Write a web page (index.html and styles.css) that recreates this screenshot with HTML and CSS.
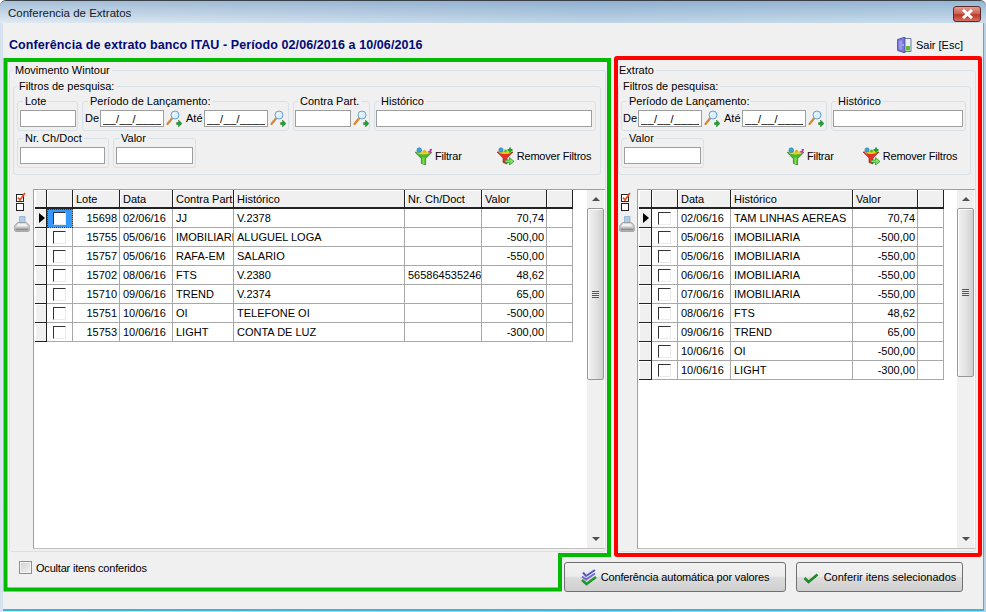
FILE: index.html
```html
<!DOCTYPE html>
<html lang="pt">
<head>
    <meta charset="UTF-8">
    <meta name="viewport" content="width=device-width, initial-scale=1.0">
    <title>Conferencia de Extratos</title>
    <link rel="stylesheet" href="styles.css">
</head>
<body>
    <svg class="sprite" xmlns="http://www.w3.org/2000/svg">
        <symbol id="i-search" viewBox="0 0 16 17">
            <path d="M6 8.500 1.500 14" stroke="#d9862c" stroke-width="2.200" stroke-linecap="round"/>
            <circle cx="9" cy="5" r="4" fill="#d8eefc" stroke="#6f9fd0"/>
            <path d="M7 5.500a2.500 2.500 0 0 1 2.500-2.500" fill="none" stroke="#fff" stroke-width="1.200"/>
            <path d="M10.500 12.500h2v-2.500l3.500 3.500-3.500 3.500v-2.500h-2z" fill="#1f9e2c" stroke="#0f6d1a" stroke-width=".4"/>
        </symbol>
        <symbol id="i-funnel" viewBox="0 0 16 17">
            <path d="M0 5h16l-6 6v6l-4-1.500v-4.500z" fill="#49b82c" stroke="#1f7d1a" stroke-width=".6"/>
            <path d="M7 10h2v6H7z" fill="#7fd84f"/>
            <ellipse cx="8" cy="5.500" rx="6" ry="1.500" fill="#e5d22a"/>
            <circle cx="4" cy="3" r="2.200" fill="#39a6e0" stroke="#1f6d9e" stroke-width=".5"/>
            <circle cx="9" cy="4" r="1.400" fill="#e8b020"/>
            <path d="M12.500 4.500h2v-2h1.500" fill="none" stroke="#d81fc8" stroke-width="1.400"/>
        </symbol>
        <symbol id="i-funnel-red" viewBox="0 0 17 18">
            <path d="M0 5h16l-6 6v6l-4-1.500v-4.500z" fill="#e3342a" stroke="#94140e" stroke-width=".6"/>
            <ellipse cx="8" cy="5.500" rx="6" ry="1.500" fill="#e5d22a"/>
            <circle cx="4" cy="3" r="2.200" fill="#39a6e0" stroke="#1f6d9e" stroke-width=".5"/>
            <circle cx="8.500" cy="4" r="1.400" fill="#58b82a"/>
            <path d="M13 0.500v5M10.500 3h5" stroke="#1f9e2c" stroke-width="1.800"/>
            <path d="M8 13h4.500v-2.500l4.500 4-4.500 3.500v-2.500H8z" fill="#7fe05a" stroke="#1f8a2a" stroke-width=".7"/>
        </symbol>
        <symbol id="i-door" viewBox="0 0 15 16">
            <path d="M6 1.500h8v13H6z" fill="#e8f0f4" stroke="#6f78a8"/>
            <path d="M9 9h4v4.500H9z" fill="#5cc02c"/>
            <path d="M0.500 2.500 8 0v16L.500 13.500z" fill="#7a78d8" stroke="#4a4896" stroke-width=".8"/>
            <path d="M2 4 5 3v10l-3-1z" fill="#9a9ae8"/>
            <circle cx="6" cy="8" r=".8" fill="#e8e8ff"/>
        </symbol>
        <symbol id="i-printer" viewBox="0 0 16 16">
            <path d="M5.500 0.500h5.500v7H5.500z" fill="#a9cdea" stroke="#7fa0bd" stroke-width=".6"/>
            <path d="M3.500 6.500h9l3.500 4v3.500l-1.500 1.500h-13L0 14v-3.500z" fill="#c4c4c4" stroke="#8a8a8a" stroke-width=".6"/>
            <path d="M4 7.500h8l2 3H2z" fill="#f2f2f2"/>
            <path d="M1.500 12.500h13v2h-13z" fill="#8f8f8f"/>
        </symbol>
        <symbol id="i-check-all" viewBox="0 0 10 10">
            <rect x=".5" y="2.500" width="7" height="7" fill="#fff" stroke="#222"/>
            <path d="M2 5.500 4 8l5-7" fill="none" stroke="#ea4f1c" stroke-width="1.700"/>
        </symbol>
        <symbol id="i-check-none" viewBox="0 0 8 8">
            <rect x=".5" y=".5" width="7" height="7" fill="#fff" stroke="#222"/>
        </symbol>
        <symbol id="i-check" viewBox="0 0 16 17">
            <path d="M1.500 9 5.500 13 14.500 5.500" fill="none" stroke="#1f8a2a" stroke-width="2.600"/>
        </symbol>
        <symbol id="i-check-double" viewBox="0 0 16 17">
            <path d="M2 3.500 5 7l9-6" fill="none" stroke="#5a55c8" stroke-width="2"/>
            <path d="M1 7.500 5 10.500l9-6" fill="none" stroke="#6f6ad8" stroke-width="2"/>
            <path d="M1 11 5.500 15 15 8" fill="none" stroke="#1f9a2a" stroke-width="2.600"/>
        </symbol>
    </svg>

    <div class="window">
        <div class="titlebar">
            <span class="title">Conferencia de Extratos</span>
            <button class="close">
                <svg width="15" height="10" viewBox="0 0 15 10"><path d="M3 1 12 9M12 1 3 9" stroke="#fff" stroke-width="3"/></svg>
            </button>
        </div>

        <div class="content">
            <div class="head">
                <h1>Conferência de extrato banco ITAU - Período 02/06/2016 a 10/06/2016</h1>
                <span class="sair"><svg class="icon-door"><use href="#i-door"/></svg>Sair [Esc]</span>
            </div>

            <div class="panels">
                <fieldset class="panel panel-left">
                    <legend>Movimento Wintour</legend>
                    <fieldset class="filters">
                        <legend>Filtros de pesquisa:</legend>
                        <div class="filter-row">
                            <fieldset class="box box-lote">
                                <legend>Lote</legend>
                                <input class="field w56" type="text">
                            </fieldset>
                            <fieldset class="box box-periodo">
                                <legend>Período de Lançamento:</legend>
                                <span class="lbl-de">De</span><input class="field date" type="text" value="__/__/____"><svg class="icon-search"><use href="#i-search"/></svg><span class="lbl-ate">Até</span><input class="field date" type="text" value="__/__/____"><svg class="icon-search"><use href="#i-search"/></svg>
                            </fieldset>
                            <fieldset class="box box-contra">
                                <legend>Contra Part.</legend>
                                <input class="field w56" type="text"><svg class="icon-search"><use href="#i-search"/></svg>
                            </fieldset>
                            <fieldset class="box box-hist-left">
                                <legend>Histórico</legend>
                                <input class="field w216" type="text">
                            </fieldset>
                        </div>
                        <div class="filter-row">
                            <fieldset class="box box-doc">
                                <legend>Nr. Ch/Doct</legend>
                                <input class="field w85" type="text">
                            </fieldset>
                            <fieldset class="box box-valor">
                                <legend>Valor</legend>
                                <input class="field w77" type="text">
                            </fieldset>
                            <div class="actions actions-left">
                                <span class="action action-filter"><svg class="icon-funnel"><use href="#i-funnel"/></svg>Filtrar</span>
                                <span class="action"><svg class="icon-funnel"><use href="#i-funnel-red"/></svg>Remover Filtros</span>
                            </div>
                        </div>
                    </fieldset>

                    <div class="grid-area">
                        <div class="grid-tools tools-left">
                            <svg class="icon-check-all"><use href="#i-check-all"/></svg>
                            <svg class="icon-check-none"><use href="#i-check-none"/></svg>
                            <svg class="icon-printer"><use href="#i-printer"/></svg>
                        </div>
                        <div class="grid grid-left">
                            <table class="rows">
                                <colgroup>
                                    <col class="c-ind"><col class="c-chk"><col class="c-lote"><col class="c-data"><col class="c-contra"><col class="c-hist"><col class="c-doc"><col class="c-valor"><col class="c-end">
                                </colgroup>
                                <thead>
                                    <tr><th class="ind"></th><th></th><th>Lote</th><th>Data</th><th>Contra Part.</th><th>Histórico</th><th>Nr. Ch/Doct</th><th>Valor</th><th></th></tr>
                                </thead>
                                <tbody>
                                    <tr><td class="ind"><span class="arrow"></span></td><td class="chk sel"><span class="cb"></span></td><td class="num">15698</td><td>02/06/16</td><td>JJ</td><td>V.2378</td><td></td><td class="num">70,74</td><td></td></tr>
                                    <tr><td class="ind"></td><td class="chk"><span class="cb"></span></td><td class="num">15755</td><td>05/06/16</td><td>IMOBILIARIA</td><td>ALUGUEL LOGA</td><td></td><td class="num">-500,00</td><td></td></tr>
                                    <tr><td class="ind"></td><td class="chk"><span class="cb"></span></td><td class="num">15757</td><td>05/06/16</td><td>RAFA-EM</td><td>SALARIO</td><td></td><td class="num">-550,00</td><td></td></tr>
                                    <tr><td class="ind"></td><td class="chk"><span class="cb"></span></td><td class="num">15702</td><td>08/06/16</td><td>FTS</td><td>V.2380</td><td>5658645352468</td><td class="num">48,62</td><td></td></tr>
                                    <tr><td class="ind"></td><td class="chk"><span class="cb"></span></td><td class="num">15710</td><td>09/06/16</td><td>TREND</td><td>V.2374</td><td></td><td class="num">65,00</td><td></td></tr>
                                    <tr><td class="ind"></td><td class="chk"><span class="cb"></span></td><td class="num">15751</td><td>10/06/16</td><td>OI</td><td>TELEFONE OI</td><td></td><td class="num">-500,00</td><td></td></tr>
                                    <tr><td class="ind"></td><td class="chk"><span class="cb"></span></td><td class="num">15753</td><td>10/06/16</td><td>LIGHT</td><td>CONTA DE LUZ</td><td></td><td class="num">-300,00</td><td></td></tr>
                                </tbody>
                            </table>
                            <div class="scrollbar">
                                <div class="sb-btn"><span class="tri-up"></span></div>
                                <div class="sb-thumb thumb-left"><span class="grip"></span></div>
                                <div class="sb-track"></div>
                                <div class="sb-btn"><span class="tri-down"></span></div>
                            </div>
                        </div>
                    </div>
                </fieldset>

                <fieldset class="panel panel-right">
                    <legend>Extrato</legend>
                    <fieldset class="filters filters-right">
                        <legend>Filtros de pesquisa:</legend>
                        <div class="filter-row">
                            <fieldset class="box box-periodo">
                                <legend>Período de Lançamento:</legend>
                                <span class="lbl-de">De</span><input class="field date" type="text" value="__/__/____"><svg class="icon-search"><use href="#i-search"/></svg><span class="lbl-ate">Até</span><input class="field date" type="text" value="__/__/____"><svg class="icon-search"><use href="#i-search"/></svg>
                            </fieldset>
                            <fieldset class="box box-hist-right">
                                <legend>Histórico</legend>
                                <input class="field w130" type="text">
                            </fieldset>
                        </div>
                        <div class="filter-row">
                            <fieldset class="box box-valor">
                                <legend>Valor</legend>
                                <input class="field w77" type="text">
                            </fieldset>
                            <div class="actions actions-right">
                                <span class="action action-filter"><svg class="icon-funnel"><use href="#i-funnel"/></svg>Filtrar</span>
                                <span class="action"><svg class="icon-funnel"><use href="#i-funnel-red"/></svg>Remover Filtros</span>
                            </div>
                        </div>
                    </fieldset>

                    <div class="grid-area">
                        <div class="grid-tools tools-right">
                            <svg class="icon-check-all"><use href="#i-check-all"/></svg>
                            <svg class="icon-check-none"><use href="#i-check-none"/></svg>
                            <svg class="icon-printer"><use href="#i-printer"/></svg>
                        </div>
                        <div class="grid grid-right">
                            <table class="rows">
                                <colgroup>
                                    <col class="c-ind2"><col class="c-chk"><col class="c-data"><col class="c-hist2"><col class="c-valor"><col class="c-end">
                                </colgroup>
                                <thead>
                                    <tr><th class="ind"></th><th></th><th>Data</th><th>Histórico</th><th>Valor</th><th></th></tr>
                                </thead>
                                <tbody>
                                    <tr><td class="ind"><span class="arrow"></span></td><td class="chk"><span class="cb"></span></td><td>02/06/16</td><td>TAM LINHAS AEREAS</td><td class="num">70,74</td><td></td></tr>
                                    <tr><td class="ind"></td><td class="chk"><span class="cb"></span></td><td>05/06/16</td><td>IMOBILIARIA</td><td class="num">-500,00</td><td></td></tr>
                                    <tr><td class="ind"></td><td class="chk"><span class="cb"></span></td><td>05/06/16</td><td>IMOBILIARIA</td><td class="num">-550,00</td><td></td></tr>
                                    <tr><td class="ind"></td><td class="chk"><span class="cb"></span></td><td>06/06/16</td><td>IMOBILIARIA</td><td class="num">-550,00</td><td></td></tr>
                                    <tr><td class="ind"></td><td class="chk"><span class="cb"></span></td><td>07/06/16</td><td>IMOBILIARIA</td><td class="num">-550,00</td><td></td></tr>
                                    <tr><td class="ind"></td><td class="chk"><span class="cb"></span></td><td>08/06/16</td><td>FTS</td><td class="num">48,62</td><td></td></tr>
                                    <tr><td class="ind"></td><td class="chk"><span class="cb"></span></td><td>09/06/16</td><td>TREND</td><td class="num">65,00</td><td></td></tr>
                                    <tr><td class="ind"></td><td class="chk"><span class="cb"></span></td><td>10/06/16</td><td>OI</td><td class="num">-500,00</td><td></td></tr>
                                    <tr><td class="ind"></td><td class="chk"><span class="cb"></span></td><td>10/06/16</td><td>LIGHT</td><td class="num">-300,00</td><td></td></tr>
                                </tbody>
                            </table>
                            <div class="scrollbar">
                                <div class="sb-btn"><span class="tri-up"></span></div>
                                <div class="sb-thumb thumb-right"><span class="grip"></span></div>
                                <div class="sb-track"></div>
                                <div class="sb-btn"><span class="tri-down"></span></div>
                            </div>
                        </div>
                    </div>
                </fieldset>
            </div>

            <div class="footer">
                <label class="hide-done"><span class="hide-box"></span>Ocultar itens conferidos</label>
                <button class="btn btn-auto"><svg class="icon-btn"><use href="#i-check-double"/></svg>Conferência automática por valores</button>
                <button class="btn btn-sel"><svg class="icon-btn"><use href="#i-check"/></svg>Conferir itens selecionados</button>
            </div>
        </div>

        <!-- marcacoes verde e vermelha por cima da tela -->
        <svg class="marks" width="986" height="612" xmlns="http://www.w3.org/2000/svg">
            <path d="M6 60H609V555H560V589.500H5.500V60Z" fill="none" stroke="#00bb00" stroke-width="4"/>
            <rect x="616" y="58" width="364" height="497" rx="1" fill="none" stroke="#ff0000" stroke-width="4"/>
        </svg>
    </div>
</body>
</html>
```

FILE: styles.css
```css
* {
    box-sizing: border-box;
}
body {
    margin: 0;
    background-color: #ffffff;
    font-family: "Liberation Sans", Arial, sans-serif;
    font-size: 11px;
    color: #000;
}
.sprite {
    position: absolute;
    width: 0;
    height: 0;
}
.window {
    position: relative;
    width: 986px;
    height: 612px;
    overflow: hidden;
    display: flex;
    flex-direction: column;
    border-top: 1px solid #3a3f45;
    border-radius: 6px 6px 0 0;
    background: linear-gradient(to right, #d6e3ee, #a9c6de 60%, #b9d2e6);
}
.titlebar {
    flex: none;
    height: 22px;
    display: flex;
    align-items: center;
    justify-content: space-between;
    padding: 0 5px 0 8px;
    background: linear-gradient(to bottom, rgba(110,150,190,0.45), rgba(255,255,255,0.25));
}
.title {
    padding-top: 2px;
    font-size: 11.500px;
    color: #10202c;
}
.close {
    width: 28px;
    height: 16px;
    margin-top: 4px;
    padding: 0;
    display: flex;
    align-items: center;
    justify-content: center;
    border: 1px solid #5c2a26;
    border-radius: 3px;
    background: linear-gradient(to bottom, #e2a096, #cf5a4c 50%, #b8382a 55%, #d8705e);
}
.content {
    flex: 1;
    margin: 0 2px 1px 3px;
    display: flex;
    flex-direction: column;
    background-color: #f0f0f0;
    border-right: 1px solid #38b6e0;
    border-bottom: 2px solid #38b6e0;
}
.head {
    flex: none;
    height: 40px;
    display: flex;
    align-items: center;
    justify-content: space-between;
    padding: 4px 20px 0 6px;
}
h1 {
    margin: 0;
    font-size: 12.500px;
    font-weight: bold;
    letter-spacing: 0.09px;
    color: #000a78;
}
.sair {
    display: flex;
    align-items: center;
    gap: 4px;
    font-size: 11px;
}
.icon-door {
    width: 15px;
    height: 16px;
}
.panels {
    flex: none;
    height: 489px;
    display: flex;
    gap: 11px;
    padding-left: 6px;
}

/* group boxes */
fieldset {
    margin: 0;
    padding: 0;
    min-width: 0;
    border: 1px solid #d8e1e8;
    border-radius: 3px;
}
legend {
    padding: 0 2px;
    margin-left: 3px;
    line-height: 14px;
    height: 14px;
    white-space: nowrap;
}
.panel {
    padding-top: 2px;
}
.panel > legend,
.filters > legend {
    margin-left: 0;
}
.panel-left {
    width: 597px;
    padding-left: 3px;
}
.panel-right {
    width: 359px;
    padding-left: 0;
}
.panel-right > legend {
    margin-left: -1px;
}
.filters {
    width: 588px;
    height: 96px;
    padding: 1px 0 0 3px;
}
.filters-right {
    width: 353px;
    padding-left: 2px;
}
.filter-row {
    display: flex;
    gap: 4px;
}
.box {
    height: 37px;
    padding: 2px 0 0 2px;
    display: flex;
    flex-direction: row;
    white-space: nowrap;
}
.box-lote { width: 61px; }
.box-periodo { width: 206px; }
.box-contra { width: 77px; padding-left: 1px; }
.box-hist-left { width: 222px; padding-left: 1px; }
.box-hist-right { width: 135px; padding-left: 1px; }
.box-doc { width: 92px; }
.box-valor { width: 83px; }
.panel-left .box-periodo { width: 207px; }

.field {
    height: 17px;
    padding: 0 2px;
    border: 1px solid #9e9e9e;
    border-radius: 0;
    background-color: #fff;
    font-family: inherit;
    font-size: 11px;
    color: #000;
    vertical-align: top;
}
.w56 { width: 56px; }
.w77 { width: 77px; }
.w85 { width: 85px; }
.w130 { width: 130px; }
.w216 { width: 216px; }
.date {
    width: 64px;
    letter-spacing: 0.400px;
}
.lbl-de {
    width: 15px;
    line-height: 17px;
}
.filters-right .lbl-de {
    margin-left: -1px;
}
.lbl-ate {
    width: 18px;
    margin-left: 4px;
    line-height: 17px;
}
.icon-search {
    flex: none;
    width: 16px;
    height: 17px;
    margin-left: 2px;
}
.actions {
    display: flex;
    align-items: center;
    height: 24px;
    margin-top: 13px;
    white-space: nowrap;
    letter-spacing: -0.200px;
}
.actions-left { margin-left: 215px; }
.actions-right { margin-left: 79px; }
.action {
    display: flex;
    align-items: center;
    gap: 3px;
}
.action-filter {
    margin-right: 35px;
}
.actions-right .action-filter {
    margin-right: 29px;
}
.icon-funnel {
    width: 17px;
    height: 18px;
}

/* grid */
.grid-area {
    display: flex;
    margin-top: 14px;
    height: 360px;
}
.grid-tools {
    flex: none;
    display: flex;
    flex-direction: column;
    align-items: flex-start;
    padding: 3px 0 0 1px;
}
.tools-left { width: 20px; }
.tools-right { width: 19px; }
.icon-check-all {
    width: 10px;
    height: 10px;
    margin-left: 2px;
}
.icon-check-none {
    width: 8px;
    height: 8px;
    margin: 1px 0 0 2px;
}
.icon-printer {
    width: 16px;
    height: 16px;
    margin-top: 5px;
}
.grid {
    display: flex;
    justify-content: space-between;
    height: 360px;
    padding-left: 1px;
    border-top: 1px solid #a0a0a0;
    border-left: 1px solid #a0a0a0;
    border-bottom: 1px solid #c0c0c0;
    background-color: #fff;
}
.grid-left { width: 572px; }
.grid-right { width: 338px; }
.rows {
    table-layout: fixed;
    border-collapse: separate;
    border-spacing: 0;
    align-self: flex-start;
}
.grid-left .rows { width: 538px; }
.grid-right .rows { width: 305px; }
.c-ind { width: 12px; }
.c-ind2 { width: 13px; }
.c-chk { width: 26px; }
.c-lote { width: 47px; }
.c-data { width: 53px; }
.c-contra { width: 61px; }
.c-hist { width: 171px; }
.c-hist2 { width: 122px; }
.c-doc { width: 77px; }
.c-valor { width: 65px; }
.c-end { width: 26px; }
th, td {
    height: 19px;
    padding: 0 2px 0 3px;
    overflow: hidden;
    white-space: nowrap;
    font-weight: normal;
    text-align: left;
    line-height: 16px;
}
th {
    padding-top: 1px;
    background-color: #f0f0f0;
    border-right: 1px solid #222;
    border-bottom: 2px solid #222;
    box-shadow: inset 1px 1px 0 #fff;
}
td {
    border-right: 1px solid #a8a8a8;
    border-bottom: 1px solid #a8a8a8;
}
td.ind {
    position: relative;
    padding: 0;
    background-color: #f0f0f0;
    border-right: 1px solid #222;
    border-bottom: 1px solid #222;
    box-shadow: inset 1px 1px 0 #fff;
}
.num {
    text-align: right;
    padding-right: 2px;
}
.chk {
    padding: 0;
    text-align: center;
    font-size: 0;
}
.sel {
    background-color: #3399ff;
    outline: 1px dotted #333;
    outline-offset: -1px;
}
.cb {
    display: inline-block;
    width: 13px;
    height: 13px;
    vertical-align: middle;
    background-color: #fff;
    border: 1px solid #ebebeb;
    border-top-color: #333;
    border-left-color: #333;
}
.arrow {
    display: block;
    width: 0;
    height: 0;
    margin-left: 4px;
    border-left: 6px solid #000;
    border-top: 5px solid transparent;
    border-bottom: 5px solid transparent;
}

/* scrollbar */
.scrollbar {
    flex: none;
    width: 17px;
    margin-right: 1px;
    display: flex;
    flex-direction: column;
    background-color: #f0f0f0;
}
.sb-btn {
    flex: none;
    height: 18px;
    display: flex;
    align-items: center;
    justify-content: center;
}
.tri-up, .tri-down {
    width: 0;
    height: 0;
    border-left: 4px solid transparent;
    border-right: 4px solid transparent;
}
.tri-up { border-bottom: 4px solid #505050; }
.tri-down { border-top: 4px solid #505050; }
.sb-thumb {
    flex: none;
    display: flex;
    align-items: center;
    justify-content: center;
    border: 1px solid #979797;
    border-radius: 2px;
    background: linear-gradient(to right, #f2f2f2, #e4e4e4 50%, #cfcfcf);
    box-shadow: inset 1px 1px 0 #fff;
}
.thumb-left { height: 172px; }
.thumb-right { height: 169px; }
.sb-track {
    flex: 1;
}
.grip {
    width: 7px;
    height: 7px;
    background: repeating-linear-gradient(to bottom, #555 0, #555 1px, #e8e8e8 1px, #e8e8e8 2px);
}

/* footer */
.footer {
    flex: 1;
    display: flex;
    align-items: flex-start;
    gap: 10px;
    padding: 10px 20px 0 16px;
}
.hide-done {
    display: flex;
    align-items: center;
    gap: 4px;
    margin-right: auto;
    margin-top: -1px;
    letter-spacing: -0.200px;
}
.hide-box {
    width: 13px;
    height: 13px;
    border: 1px solid #8e8f8f;
    background: linear-gradient(135deg, #d0d0d0, #f4f4f4);
    box-shadow: inset 0 0 0 1px #f4f4f4;
}
.btn {
    height: 30px;
    padding: 0;
    display: flex;
    align-items: center;
    justify-content: center;
    gap: 4px;
    border: 1px solid #707070;
    border-radius: 3px;
    background: linear-gradient(to bottom, #f2f2f2, #ebebeb 48%, #dddddd 50%, #cfcfcf);
    font-family: inherit;
    font-size: 11px;
    color: #000;
}
.btn-auto {
    width: 222px;
    letter-spacing: -0.150px;
}
.btn-sel {
    width: 167px;
    gap: 5px;
}
.icon-btn {
    width: 16px;
    height: 17px;
}

.marks {
    position: absolute;
    left: 0;
    top: -1px;
    pointer-events: none;
}
```
